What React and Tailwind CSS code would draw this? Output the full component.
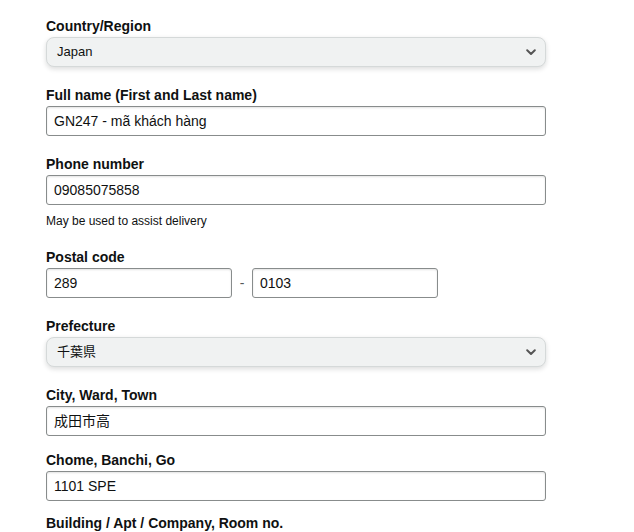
import React from "react";

// chevron của ô select
const Chevron = () => (
  <svg width="10" height="7" viewBox="0 0 10 7" className="shrink-0">
    <path d="M1.2 1.3 L5 5 L8.8 1.3" fill="none" stroke="#555" strokeWidth="2" strokeLinecap="round" strokeLinejoin="round" />
  </svg>
);

const Label = ({ children, className = "" }) => (
  <div className={`text-[14px] leading-4 font-bold text-[#0f1111] mb-[3px] ${className}`}>{children}</div>
);

const Select = ({ value }) => (
  <div className="h-[30px] w-[500px] rounded-[8px] border border-[#d5d9d9] bg-[#f0f2f2] shadow-[0_2px_5px_rgba(15,17,17,0.15)] flex items-center justify-between pl-[10px] pr-[9px] text-[13px] text-[#0f1111]">
    <span>{value}</span>
    <Chevron />
  </div>
);

const Input = ({ value, w = "w-[500px]" }) => (
  <div className={`h-[30px] ${w} rounded-[3px] border border-[#888c8c] bg-white shadow-[inset_0_1px_2px_rgba(15,17,17,0.12)] flex items-center pl-[7px] text-[14px] text-[#0f1111]`}>
    {value}
  </div>
);

const App = () => {
  return (
    <div
      className="w-[634px] h-[532px] bg-white overflow-hidden pl-[46px] pt-[18px]"
      style={{ fontFamily: '"Liberation Sans", Arial, "Noto Sans CJK JP", sans-serif' }}
    >
      <Label>Country/Region</Label>
      <Select value="Japan" />

      <Label className="mt-[20px]">Full name (First and Last name)</Label>
      <Input value="GN247 - mã khách hàng" />

      <Label className="mt-[20px]">Phone number</Label>
      <Input value="09085075858" />
      <div className="text-[12px] leading-4 text-[#0f1111] mt-[8px]">May be used to assist delivery</div>

      <Label className="mt-[20px]">Postal code</Label>
      <div className="flex items-center">
        <Input value="289" w="w-[186px]" />
        <span className="w-[20px] text-center text-[14px] text-[#565959]">-</span>
        <Input value="0103" w="w-[186px]" />
      </div>

      <Label className="mt-[20px]">Prefecture</Label>
      <Select value="千葉県" />

      <Label className="mt-[20px]">City, Ward, Town</Label>
      <Input value="成田市高" />

      <Label className="mt-[16px]">Chome, Banchi, Go</Label>
      <Input value="1101 SPE" />

      <Label className="mt-[14px]">Building / Apt / Company, Room no.</Label>
    </div>
  );
};

export default App;
